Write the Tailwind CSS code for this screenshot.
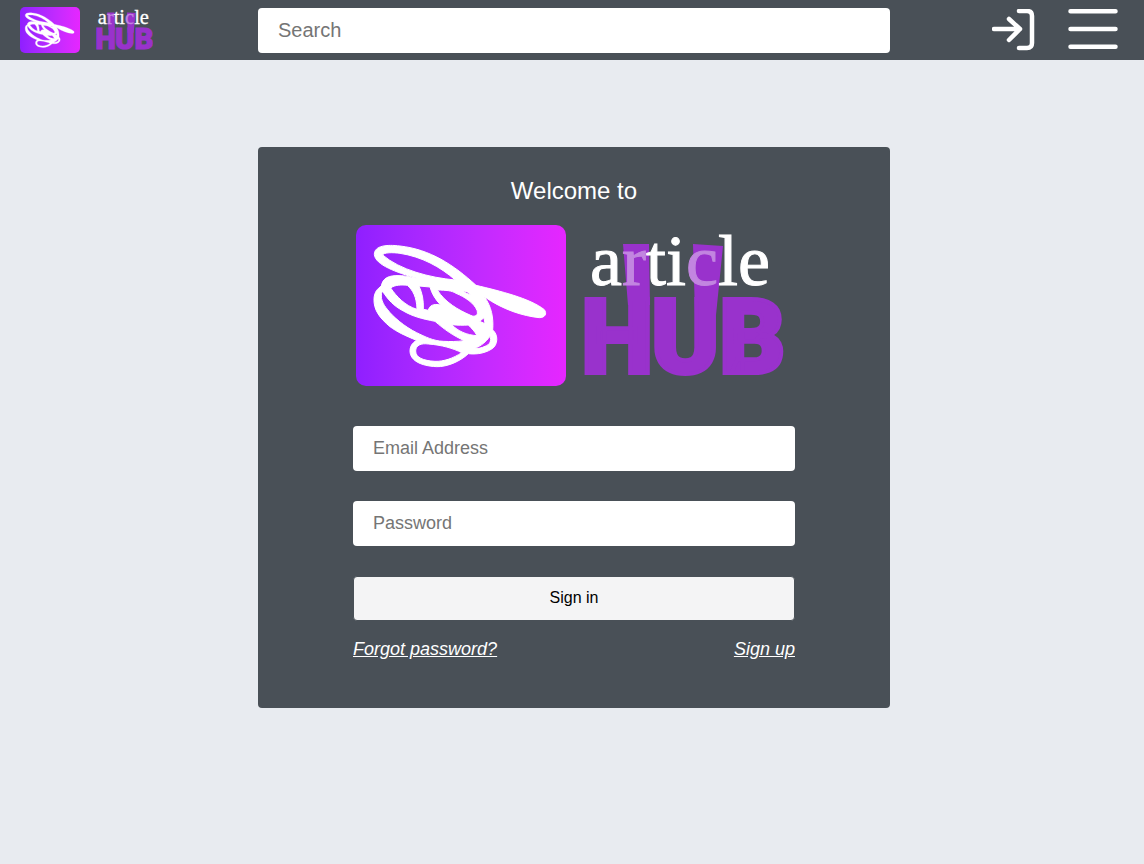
<!DOCTYPE html>
<html lang="en">
<head>
<meta charset="utf-8">
<meta name="viewport" content="width=device-width, initial-scale=1">
<title>Article Hub - Sign in</title>
<script src="https://cdn.jsdelivr.net/npm/@tailwindcss/browser@4"></script>
</head>
<body class="min-h-screen bg-[#e8ebf0] font-['Liberation_Sans',Arial,sans-serif]">
<svg class="hidden" aria-hidden="true">
  <symbol id="scribble" viewBox="18 30 630 483">
    <path fill="#fff" stroke="#fff" stroke-width="3" fill-rule="evenodd" d="M73 118C73 92 110 88 150 93C240 103 312 150 378 211C450 228 540 250 583 284C592 296 585 308 568 308C520 303 460 285 403 245C425 275 431 310 428 345C445 358 445 390 425 402C400 418 370 418 355 416C330 440 290 456 260 455C210 453 180 435 180 408C180 395 186 384 200 376C165 362 140 350 120 335C90 310 70 285 72 250C74 230 82 222 94 213C98 190 115 180 150 182C165 182 175 185 200 190C140 172 75 150 73 118Z
    M98 120C100 112 130 112 150 115C215 125 270 155 316 195C240 188 150 165 98 120Z
    M122 219C135 209 155 209 172 211C188 225 200 245 201 283C165 272 140 245 122 219Z
    M207 213L240 216C245 235 257 255 272 270C250 265 238 272 235 286L220 283C221 255 217 235 207 213Z
    M262 225C290 226 303 226 318 235C345 246 373 265 381 286C386 300 376 308 362 301C325 285 285 262 262 225Z
    M97 228C88 248 100 269 112 283C128 305 165 336 200 353C225 365 250 378 280 379C300 380 320 380 343 377C310 362 285 345 255 319C215 311 190 305 160 288C130 272 115 255 97 228Z
    M305 329C325 331 340 331 355 330C365 340 375 350 381 362C350 360 325 349 305 329Z
    M389 319L402 308L405 326Z
    M197 408C197 390 215 384 235 387C275 390 310 400 335 413C310 430 280 440 255 439C220 437 197 428 197 408Z
    M420 364C425 377 420 389 405 394C395 399 385 401 372 401C395 392 407 381 420 364Z
    M338 229C347 227 357 231 361 240C353 237 346 233 338 229Z"/>
  </symbol>
  <symbol id="wordmark" viewBox="0 0 200 161">
    <path fill="#9932cc" d="M39 19H65L66 80H44ZM109 19L139 21L132 90H111Z"/>
    <text y="148" font-family="Roboto, sans-serif" font-weight="900" font-size="103" fill="#9932cc" stroke="#9932cc" stroke-width="4"><tspan x="-3">H</tspan><tspan x="67">U</tspan><tspan x="135">B</tspan></text>
    <text x="6" y="60" font-family="Liberation Serif, serif" font-size="72" fill="#fff" stroke="#fff">a<tspan fill="#c285e0" stroke="#c285e0">r</tspan>ti<tspan fill="#c285e0" stroke="#c285e0">c</tspan>le</text>
  </symbol>
</svg>

<header class="flex h-[60px] items-center bg-[#495057]">
  <a href="#" aria-label="Article Hub home" class="flex w-[258px] shrink-0 items-center gap-4 pl-5">
    <svg class="h-[46px] w-[60px] rounded-[5px] bg-linear-to-r from-[#8f1fff] to-[#e626ff]"><use href="#scribble"/></svg>
    <svg class="h-[46px] w-[57px] overflow-visible"><use href="#wordmark"/></svg>
  </a>
  <input type="search" aria-label="Search" placeholder="Search" class="h-[45px] min-w-0 flex-1 rounded bg-white px-5 text-xl outline-none placeholder:text-[#757575]">
  <nav class="flex w-[254px] shrink-0 items-center justify-end gap-[33px] pr-[26px]">
    <a href="#" aria-label="Sign in">
      <svg class="h-[42px] w-[43px]" viewBox="0 0 43 42" fill="none" stroke="#fff" stroke-width="4.5" stroke-linecap="round" stroke-linejoin="round"><path d="M27 2H35Q40 2 40 7V34Q40 39 35 39H27M2 20H28M17 10L28 20L17 31" /></svg>
    </a>
    <button type="button" aria-label="Menu">
      <svg class="h-[42px] w-[50px]" viewBox="0 0 50 42" stroke="#fff" stroke-width="4.5" stroke-linecap="round"><path d="M2.5 2.3H47.5M2.5 20H47.5M2.5 37.7H47.5"/></svg>
    </button>
  </nav>
</header>

<main class="pt-[87px] pl-1">
  <form class="mx-auto flex max-w-[632px] flex-col rounded bg-[#495057] px-[95px] pt-7 pb-[45px]">
    <h1 class="text-center text-2xl text-white">Welcome to</h1>
    <div class="mt-[18px] mb-10 flex justify-center gap-[18px] pr-2">
      <svg class="h-[161px] w-[210px] rounded-[10px] bg-linear-to-r from-[#8f1fff] to-[#e626ff]" role="img" aria-label="Article Hub logo"><use href="#scribble"/></svg>
      <svg class="h-[161px] w-[200px] overflow-visible"><use href="#wordmark"/></svg>
    </div>
    <input type="email" aria-label="Email Address" placeholder="Email Address" class="mb-[30px] h-[45px] rounded bg-white px-5 text-lg outline-none placeholder:text-[#757575]">
    <input type="password" aria-label="Password" placeholder="Password" class="mb-[30px] h-[45px] rounded bg-white px-5 text-lg outline-none placeholder:text-[#757575]">
    <button type="submit" class="h-[45px] rounded border border-[#495057] bg-[#f4f4f5] pb-0.5 text-base text-black">Sign in</button>
    <div class="mt-3.5 flex justify-between text-lg text-white italic underline">
      <a href="#">Forgot password?</a>
      <a href="#">Sign up</a>
    </div>
  </form>
</main>
</body>
</html>
